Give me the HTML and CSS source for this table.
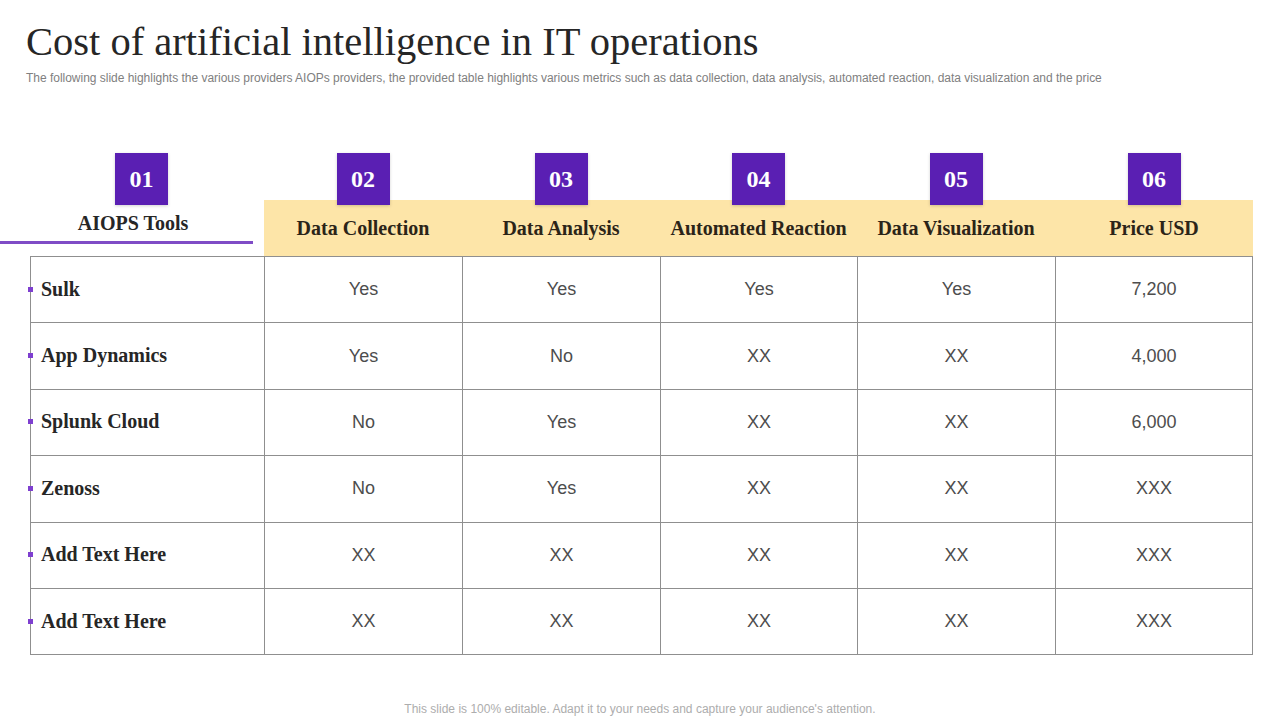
FILE: index.html
```html
<!DOCTYPE html>
<html lang="en">
<head>
<meta charset="utf-8">
<title>Cost of artificial intelligence in IT operations</title>
<link rel="stylesheet" href="styles.css">
</head>
<body>
<div class="slide">
  <header class="head">
    <h1 class="title">Cost of artificial intelligence in IT operations</h1>
    <p class="subtitle">The following slide highlights the various providers AIOPs providers, the provided table highlights various metrics such as data collection, data analysis, automated reaction, data visualization and the price</p>
  </header>

  <div class="board">
    <div class="hgrid">
      <div class="hcell first">
        <div class="badge">01</div>
        <div class="tools">AIOPS Tools</div>
      </div>
      <div class="hcell">
        <div class="badge">02</div>
        <div class="band">Data Collection</div>
      </div>
      <div class="hcell">
        <div class="badge">03</div>
        <div class="band">Data Analysis</div>
      </div>
      <div class="hcell">
        <div class="badge">04</div>
        <div class="band">Automated Reaction</div>
      </div>
      <div class="hcell">
        <div class="badge">05</div>
        <div class="band">Data Visualization</div>
      </div>
      <div class="hcell">
        <div class="badge">06</div>
        <div class="band">Price USD</div>
      </div>
    </div>

    <table class="grid">
      <colgroup>
        <col class="c1"><col class="c2"><col class="c2"><col class="c3"><col class="c2"><col class="c3">
      </colgroup>
      <tbody>
        <tr><th><span class="dot"></span>Sulk</th><td>Yes</td><td>Yes</td><td>Yes</td><td>Yes</td><td>7,200</td></tr>
        <tr><th><span class="dot"></span>App Dynamics</th><td>Yes</td><td>No</td><td>XX</td><td>XX</td><td>4,000</td></tr>
        <tr><th><span class="dot"></span>Splunk Cloud</th><td>No</td><td>Yes</td><td>XX</td><td>XX</td><td>6,000</td></tr>
        <tr><th><span class="dot"></span>Zenoss</th><td>No</td><td>Yes</td><td>XX</td><td>XX</td><td>XXX</td></tr>
        <tr><th><span class="dot"></span>Add Text Here</th><td>XX</td><td>XX</td><td>XX</td><td>XX</td><td>XXX</td></tr>
        <tr><th><span class="dot"></span>Add Text Here</th><td>XX</td><td>XX</td><td>XX</td><td>XX</td><td>XXX</td></tr>
      </tbody>
    </table>
  </div>

  <footer class="foot">This slide is 100% editable. Adapt it to your needs and capture your audience's attention.</footer>
</div>
</body>
</html>
```

FILE: styles.css
```css
* { box-sizing: border-box; }
html, body { margin: 0; padding: 0; background: #ffffff; }
body { width: 1280px; height: 720px; overflow: hidden; }

.slide {
  width: 1280px;
  height: 720px;
  display: flex;
  flex-direction: column;
}

.head { padding: 18px 0 0 26px; }

.title {
  margin: 0;
  font-family: "Liberation Serif", "Times New Roman", serif;
  font-weight: normal;
  font-size: 40.5px;
  line-height: 48px;
  color: #262626;
  letter-spacing: 0;
}

.subtitle {
  margin: 5px 0 0 0;
  font-family: "Liberation Sans", Arial, sans-serif;
  font-size: 12px;
  line-height: 14px;
  color: #808080;
  letter-spacing: -0.02px;
  white-space: nowrap;
}

.board {
  margin: 68px 0 0 30px;
  width: 1223px;
}

.hgrid {
  display: grid;
  grid-template-columns: 234px 198px 198px 197px 198px 198px;
}

.hcell {
  display: flex;
  flex-direction: column;
  align-items: center;
}

.hcell.first {
  margin-left: -30px;
  padding-left: 30px;
  margin-right: 11px;
}

.badge {
  position: relative;
  z-index: 1;
  width: 53px;
  height: 52px;
  background: #5a1fb3;
  color: #ffffff;
  font-family: "Liberation Serif", "Times New Roman", serif;
  font-weight: bold;
  font-size: 24px;
  display: flex;
  align-items: center;
  justify-content: center;
  box-shadow: 0 1px 3px rgba(0, 0, 0, 0.18);
}

.band {
  align-self: stretch;
  margin-top: -5px;
  height: 56px;
  background: #fde5a8;
  display: flex;
  align-items: center;
  justify-content: center;
  font-family: "Liberation Serif", "Times New Roman", serif;
  font-weight: bold;
  font-size: 20px;
  color: #2b2418;
}

.tools {
  align-self: stretch;
  margin-left: -30px;
  margin-top: -5px;
  height: 44px;
  padding: 11px 0 0 13px;
  border-bottom: 3px solid #7f4cc6;
  text-align: center;
  font-family: "Liberation Serif", "Times New Roman", serif;
  font-weight: bold;
  font-size: 20px;
  line-height: 24px;
  color: #262626;
}

.grid {
  margin-top: 0;
  border-collapse: collapse;
  width: 1223px;
  table-layout: fixed;
}

.grid col.c1 { width: 234px; }
.grid col.c2 { width: 198px; }
.grid col.c3 { width: 197px; }

.grid tr { height: 66.4px; }

.grid th, .grid td {
  border: 1px solid #8f8f8f;
  padding: 0;
  vertical-align: middle;
}

.grid th {
  text-align: left;
  font-family: "Liberation Serif", "Times New Roman", serif;
  font-weight: bold;
  font-size: 20px;
  color: #262626;
  padding-bottom: 1px;
}

.dot {
  display: inline-block;
  width: 5px;
  height: 5px;
  background: #7e3fd0;
  margin: 0 8px 0 -3px;
  vertical-align: 4px;
}

.grid td {
  text-align: center;
  font-family: "Liberation Sans", Arial, sans-serif;
  font-size: 18px;
  color: #4d4d4d;
}

.foot {
  margin-top: auto;
  padding-bottom: 4px;
  text-align: center;
  font-family: "Liberation Sans", Arial, sans-serif;
  font-size: 12px;
  line-height: 14px;
  color: #adadad;
}
```
